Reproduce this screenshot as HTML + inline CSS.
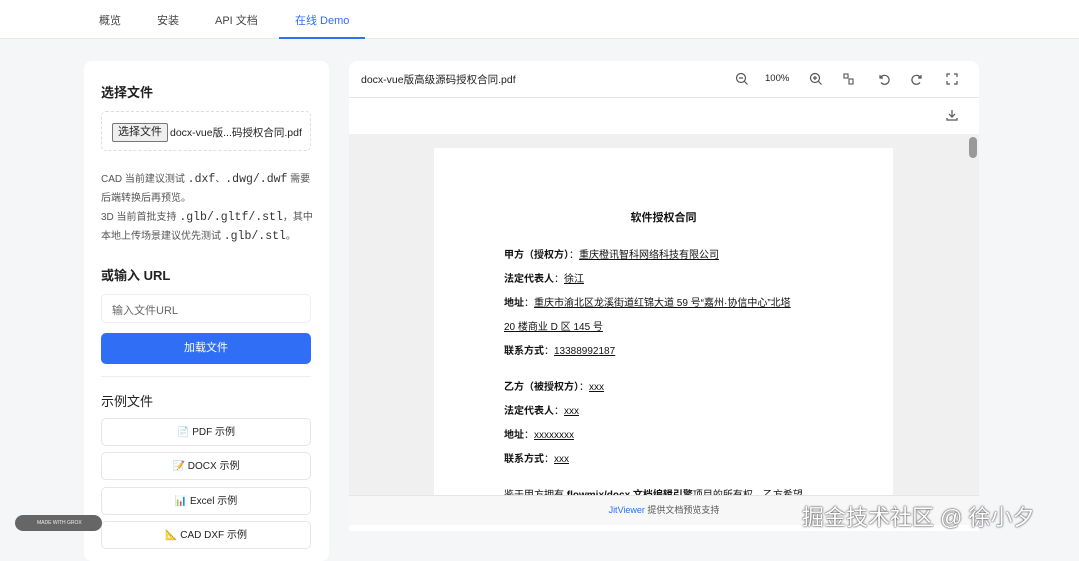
<!DOCTYPE html>
<html><head><meta charset="utf-8"><style>
*{box-sizing:border-box;margin:0;padding:0}
body{width:1079px;height:547px;overflow:hidden;background:#f5f6f8;font-family:"Liberation Sans","Noto Sans CJK SC",sans-serif;color:#222;position:relative}
.nav{position:absolute;left:0;top:0;width:1079px;height:39px;background:#fff;border-bottom:1px solid #e5e7eb}
.nav span{position:absolute;top:12px;font-size:11px;color:#444}
.left{position:absolute;left:84px;top:61px;width:245px;height:500px;background:#fff;border-radius:8px}
.h{position:absolute;left:17px;font-size:13px;font-weight:bold;color:#222}
.fbox{position:absolute;left:17px;top:50px;width:210px;height:40px;border:1px dashed #ddd;border-radius:5px}
.fbtn{position:absolute;left:10px;top:11px;height:19px;padding:0 5px;background:#efefef;border:1px solid #777;border-radius:2px;font-size:11px;line-height:17px}
.note{position:absolute;left:17px;font-size:10px;color:#555;line-height:19px;width:215px}
.note code{font-family:"Liberation Mono",monospace;font-size:11.5px;color:#333}
.inp{position:absolute;left:17px;top:233px;width:210px;height:29px;border:1px solid #eee;border-radius:5px;font-size:11px;color:#666;padding:7px 10px}
.btn{position:absolute;left:17px;top:272px;width:210px;height:31px;background:#2f6ef5;border-radius:5px;color:#fff;font-size:11px;text-align:center;line-height:31px}
.ex{position:absolute;left:17px;width:210px;height:28px;border:1px solid #e6e6e6;border-radius:5px;font-size:10px;text-align:center;line-height:27px}
.right{position:absolute;left:349px;top:61px;width:630px;height:470px;background:#fff;border-radius:8px 8px 0 0;overflow:hidden}
.gray{position:absolute;left:0;top:73px;width:630px;height:361px;background:#f0f0f0}
.page{position:absolute;left:85px;top:14px;width:459px;height:360px;background:#fff}
.page p{position:absolute;left:70px;font-size:10px;color:#111}
.page b{font-weight:bold}
.u{text-decoration:underline}
.foot{position:absolute;left:0;top:434px;width:630px;height:30px;background:#f7f7f7;border-top:1px solid #e5e5e5;font-size:9px;text-align:center;line-height:28px;color:#555}
.ic{position:absolute;top:11px;width:14px;height:14px}
</style></head><body>
<div class="nav">
<span style="left:99px">概览</span><span style="left:157px">安装</span><span style="left:215px">API 文档</span><span style="left:295px;color:#2f6ef5">在线 Demo</span>
<div style="position:absolute;left:279px;top:37px;width:86px;height:2px;background:#2f6ef5"></div>
</div>
<div class="left">
<div class="h" style="top:21px">选择文件</div>
<div class="fbox"><div class="fbtn">选择文件</div><span style="position:absolute;left:68px;top:13px;font-size:10.5px">docx-vue版...码授权合同.pdf</span></div>
<div class="note" style="top:109px">CAD 当前建议测试 <code>.dxf</code>、<code>.dwg/.dwf</code> 需要后端转换后再预览。</div>
<div class="note" style="top:147px">3D 当前首批支持 <code>.glb/.gltf/.stl</code>，其中本地上传场景建议优先测试 <code>.glb/.stl</code>。</div>
<div class="h" style="top:204px">或输入 URL</div>
<div class="inp">输入文件URL</div>
<div class="btn">加载文件</div>
<div style="position:absolute;left:17px;top:315px;width:210px;height:1px;background:#eee"></div>
<div class="h" style="top:330px;font-weight:normal">示例文件</div>
<div class="ex" style="top:357px">📄 PDF 示例</div>
<div class="ex" style="top:391px">📝 DOCX 示例</div>
<div class="ex" style="top:426px">📊 Excel 示例</div>
<div class="ex" style="top:460px">📐 CAD DXF 示例</div>
</div>
<div class="right">
<div style="position:absolute;left:12px;top:11px;font-size:10.5px">docx-vue版高级源码授权合同.pdf</div>
<svg class="ic" style="left:386px" viewBox="0 0 14 14" fill="none" stroke="#555" stroke-width="1.2"><circle cx="6" cy="6" r="4.5"/><path d="M4 6h4M9.5 9.5l3 3"/></svg>
<div style="position:absolute;left:416px;top:12px;font-size:9.5px">100%</div>
<svg class="ic" style="left:460px" viewBox="0 0 14 14" fill="none" stroke="#555" stroke-width="1.2"><circle cx="6" cy="6" r="4.5"/><path d="M4 6h4M6 4v4M9.5 9.5l3 3"/></svg>
<svg class="ic" style="left:493px" viewBox="0 0 14 14" fill="none" stroke="#555" stroke-width="1.1"><rect x="2" y="2" width="4" height="4"/><rect x="7" y="7" width="4" height="5"/></svg>
<svg class="ic" style="left:528px" viewBox="0 0 14 14" fill="none" stroke="#555" stroke-width="1.2"><path d="M3 3v3h3M3.5 6A4.5 4.5 0 1 1 4 10.5"/></svg>
<svg class="ic" style="left:561px" viewBox="0 0 14 14" fill="none" stroke="#555" stroke-width="1.2"><path d="M11 3v3H8M10.5 6A4.5 4.5 0 1 0 10 10.5"/></svg>
<svg class="ic" style="left:596px" viewBox="0 0 14 14" fill="none" stroke="#555" stroke-width="1.2"><path d="M2 5V2h3M9 2h3v3M12 9v3H9M5 12H2V9"/></svg>
<div style="position:absolute;left:0;top:36px;width:630px;height:1px;background:#e5e5e5"></div>
<svg class="ic" style="left:596px;top:47px" viewBox="0 0 14 14" fill="none" stroke="#555" stroke-width="1.2"><path d="M7 2v7M4 6l3 3 3-3M2 10v2h10v-2"/></svg>
<div class="gray">
<div class="page">
<p style="left:0;width:459px;text-align:center;top:61px;font-size:11px"><b>软件授权合同</b></p>
<p style="top:98px"><b>甲方（授权方）</b>：<span class="u">重庆橙讯智科网络科技有限公司</span></p>
<p style="top:122px"><b>法定代表人</b>：<span class="u">徐江</span></p>
<p style="top:146px"><b>地址</b>：<span class="u">重庆市渝北区龙溪街道红锦大道 59 号“嘉州·协信中心”北塔</span></p>
<p style="top:170px"><span class="u">20 楼商业 D 区 145 号</span></p>
<p style="top:194px"><b>联系方式</b>：<span class="u">13388992187</span></p>
<p style="top:230px"><b>乙方（被授权方）</b>：<span class="u">xxx</span></p>
<p style="top:254px"><b>法定代表人</b>：<span class="u">xxx</span></p>
<p style="top:278px"><b>地址</b>：<span class="u">xxxxxxxx</span></p>
<p style="top:302px"><b>联系方式</b>：<span class="u">xxx</span></p>
<p style="top:338px">鉴于甲方拥有 <b>flowmix/docx 文档编辑引擎</b>项目的所有权，乙方希望</p>
</div>
<div style="position:absolute;left:620px;top:3px;width:8px;height:21px;background:#999;border-radius:4px"></div>
</div>
<div class="foot"><span style="color:#2f6ef5">JitViewer</span> 提供文档预览支持</div>
</div>
<div style="position:absolute;left:15px;top:515px;width:87px;height:16px;background:#666;border-radius:8px;color:#eee;font-size:5px;line-height:16px;padding-left:22px">MADE WITH GROX</div>
<div style="position:absolute;left:802px;top:500px;font-size:22px;color:#fff;text-shadow:0 0 2px #444,0 0 1px #444">掘金技术社区 @ 徐小夕</div>
</body></html>
